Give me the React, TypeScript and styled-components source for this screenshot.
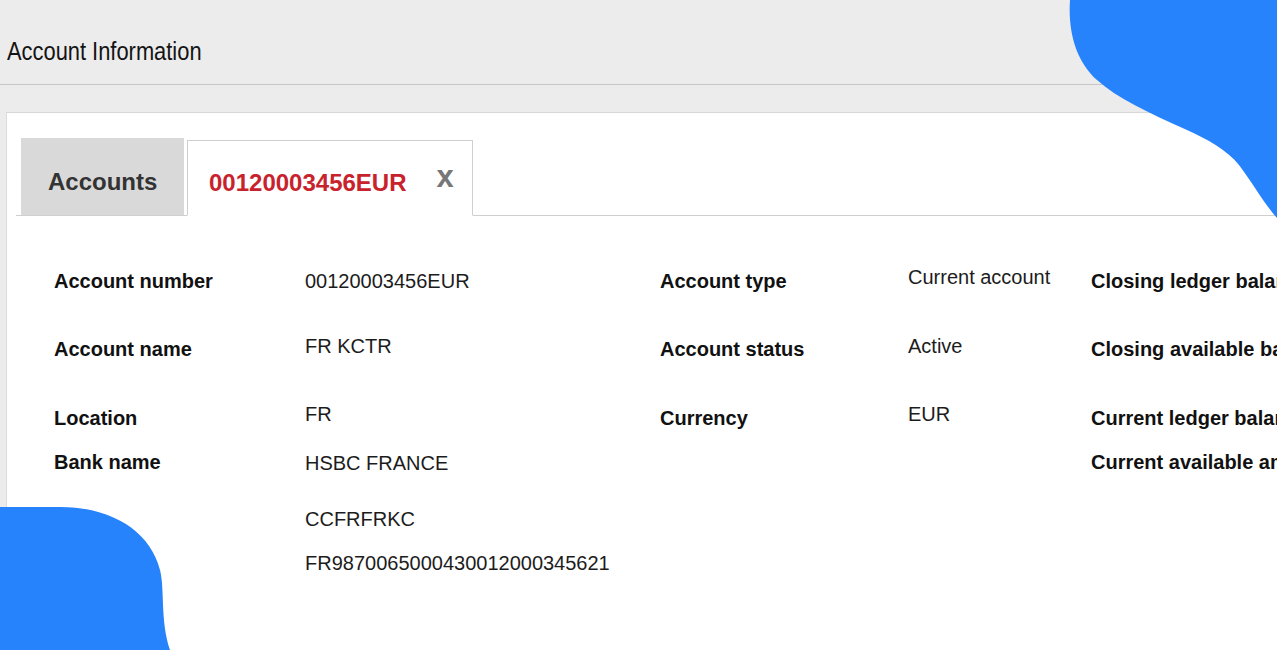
import React from "react";
import styled, { createGlobalStyle } from "styled-components";

const GlobalStyle = createGlobalStyle`
  html, body {
    margin: 0;
    padding: 0;
    background: #ececec;
    font-family: "Liberation Sans", Arial, sans-serif;
  }
`;

const Page = styled.div`
  position: relative;
  width: 100%;
  height: 650px;
  overflow: hidden;
  background: #ececec;
`;

const Header = styled.header`
  height: 85px;
  display: flex;
  align-items: center;
  padding: 19px 0 0 7px;
  box-sizing: border-box;
  border-bottom: 1px solid #c6c6c6;
`;

const Title = styled.h1`
  margin: 0;
  font-size: 25px;
  font-weight: 400;
  color: #141414;
  white-space: nowrap;
  transform: scaleX(0.875);
  transform-origin: left center;
`;

const Panel = styled.section`
  margin: 27px 0 0 6px;
  height: 540px;
  background: #fff;
  border-top: 1px solid #d8d8d8;
  border-left: 1px solid #dcdcdc;
`;

const TabBar = styled.nav`
  display: flex;
  align-items: flex-end;
  gap: 3px;
  margin: 25px 0 0 9px;
  padding-left: 5px;
  border-bottom: 1px solid #cfcfcf;
`;

const Tab = styled.div<{ $active?: boolean }>`
  display: flex;
  align-items: center;
  box-sizing: border-box;
  font-size: 24px;
  font-weight: 700;
  white-space: nowrap;
  ${(p) =>
    p.$active
      ? `
    height: 76px;
    padding: 9px 18px 0 21px;
    margin-bottom: -1px;
    background: #fff;
    color: #c8232d;
    border: 1px solid #cfcfcf;
    border-bottom-color: #fff;
  `
      : `
    height: 77px;
    width: 163px;
    padding: 10px 0 0 27px;
    background: #d9d9d9;
    color: #333;
  `}
`;

const Close = styled.span`
  margin: -12px 0 0 30px;
  font-size: 31px;
  font-weight: 700;
  color: #777;
  cursor: pointer;
`;

const Details = styled.div`
  display: grid;
  grid-template-columns: 251px 355px 248px 183px 400px;
  grid-template-rows: 68px 69px 44px 57px 44px 24px;
  margin: 53px 0 0 47px;
  line-height: 24px;
`;

const Label = styled.div`
  font-size: 20px;
  font-weight: 700;
  color: #111;
  white-space: nowrap;
`;

const Value = styled.div<{ $lift?: number }>`
  font-size: 20px;
  color: #1c1c1c;
  white-space: nowrap;
  margin-top: ${(p) => -(p.$lift ?? 0)}px;
`;

const Blob = styled.svg<{ $corner: "top-right" | "bottom-left" }>`
  position: absolute;
  fill: #2683fb;
  ${(p) =>
    p.$corner === "top-right"
      ? "top: 0; right: 0; width: 210px; height: 230px;"
      : "bottom: 0; left: 0; width: 175px; height: 145px;"}
`;

type Row = [string, string, number, string, string, number, string];

const rows: Row[] = [
  ["Account number", "00120003456EUR", 0, "Account type", "Current account", 4, "Closing ledger balance"],
  ["Account name", "FR KCTR", 3, "Account status", "Active", 3, "Closing available balance"],
  ["Location", "FR", 4, "Currency", "EUR", 4, "Current ledger balance"],
  ["Bank name", "HSBC FRANCE", -1, "", "", 0, "Current available amount"],
  ["", "CCFRFRKC", 0, "", "", 0, ""],
  ["", "FR9870065000430012000345621", 0, "", "", 0, ""],
];

export default function App() {
  return (
    <Page>
      <GlobalStyle />
      <Header>
        <Title>Account Information</Title>
      </Header>
      <Panel>
        <TabBar>
          <Tab>Accounts</Tab>
          <Tab $active>
            00120003456EUR
            <Close>x</Close>
          </Tab>
        </TabBar>
        <Details>
          {rows.map(([l1, v1, s1, l2, v2, s2, l3], i) => (
            <React.Fragment key={i}>
              <Label>{l1}</Label>
              <Value $lift={s1}>{v1}</Value>
              <Label>{l2}</Label>
              <Value $lift={s2}>{v2}</Value>
              <Label>{l3}</Label>
            </React.Fragment>
          ))}
        </Details>
      </Panel>

      {/* decorative corner shapes */}
      <Blob $corner="top-right" viewBox="0 0 210 230">
        <path d="M3 0 C1 30 8 60 30 80 C50 98 80 112 120 130 C140 139 160 150 172 165 C185 182 198 205 210 218 V0 Z" />
      </Blob>
      <Blob $corner="bottom-left" viewBox="0 0 175 145">
        <path d="M0 2 L60 2 C110 2 150 25 160 65 C165 85 160 115 170 145 L0 145 Z" />
      </Blob>
    </Page>
  );
}
